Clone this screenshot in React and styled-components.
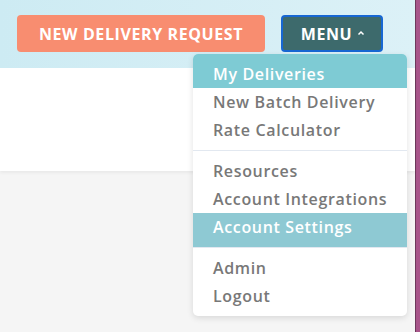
import React from "react";
import styled, { createGlobalStyle } from "styled-components";

const GlobalStyle = createGlobalStyle`
  html, body {
    margin: 0;
    padding: 0;
    background: #f5f5f5;
    font-family: "Open Sans", "DejaVu Sans", sans-serif;
  }
`;

const Page = styled.div`
  display: flex;
  width: 420px;
  height: 332px;
  overflow: hidden;
`;

const Main = styled.div`
  flex: 1;
  display: flex;
  flex-direction: column;
  position: relative;
`;

const SideStrip = styled.div`
  width: 4px;
  background: #a8558a;
  border-left: 1px solid #6e3a5c;
`;

const Header = styled.header`
  height: 68px;
  background: linear-gradient(90deg, #cdebf3 0%, #dcf1f7 100%);
  display: flex;
  align-items: flex-start;
  padding: 15px 0 0 17px;
  gap: 16px;
  box-sizing: border-box;
`;

const Button = styled.button`
  height: 37px;
  padding: 0;
  border-radius: 4px;
  color: #fff;
  font-family: "Open Sans", "DejaVu Sans", sans-serif;
  font-weight: 700;
  font-size: 16px;
  letter-spacing: 0.6px;
  text-transform: uppercase;
  display: flex;
  align-items: center;
  justify-content: center;
  gap: 5px;
  cursor: pointer;
  box-sizing: border-box;
`;

const RequestButton = styled(Button)`
  width: 248px;
  background: #f88d70;
  border: none;
`;

const MenuButton = styled(Button)`
  width: 102px;
  background: #3d6a6c;
  border: 2px solid #1767d3;
  padding-left: 2px;
`;

const Caret = styled.svg`
  width: 8px;
  height: 6px;
  margin-top: -1px;
`;

const WhiteBand = styled.div`
  height: 103px;
  background: #fff;
  box-shadow: 0 2px 3px rgba(0, 0, 0, 0.05);
`;

const Dropdown = styled.nav`
  position: absolute;
  top: 54px;
  left: 193px;
  width: 214px;
  background: #fff;
  border-radius: 5px;
  box-shadow: 0 2px 6px rgba(0, 0, 0, 0.12);
  overflow: hidden;
`;

const Group = styled.div`
  & + & {
    border-top: 1px solid #e2e8f0;
  }
`;

const Item = styled.a`
  display: block;
  height: 28px;
  line-height: 28px;
  padding: 0 20px;
  font-size: 16px;
  font-weight: 600;
  letter-spacing: 0.65px;
  color: ${({ $active }) => ($active ? "#fff" : "#787878")};
  background: ${({ $active }) => $active || "transparent"};
  text-decoration: none;
  white-space: nowrap;

  &:first-child {
    padding-top: 6px;
  }
  &:last-child {
    padding-bottom: 6px;
  }
`;

const groups = [
  [
    { label: "My Deliveries", active: "#7ecbd4" },
    { label: "New Batch Delivery" },
    { label: "Rate Calculator" },
  ],
  [
    { label: "Resources" },
    { label: "Account Integrations" },
    { label: "Account Settings", active: "#8ec9d3" },
  ],
  [{ label: "Admin" }, { label: "Logout" }],
];

export default function App() {
  return (
    <>
      <GlobalStyle />
      <Page>
        <Main>
          <Header>
            <RequestButton>New Delivery Request</RequestButton>
            <MenuButton>
              Menu
              <Caret viewBox="0 0 8 6">
                <path d="M1.5 4.5 L4 2 L6.5 4.5" fill="none" stroke="#fff" strokeWidth="1.5" />
              </Caret>
            </MenuButton>
          </Header>
          <WhiteBand />
          <Dropdown>
            {groups.map((g, i) => (
              <Group key={i}>
                {g.map((it) => (
                  <Item key={it.label} $active={it.active}>
                    {it.label}
                  </Item>
                ))}
              </Group>
            ))}
          </Dropdown>
        </Main>
        <SideStrip />
      </Page>
    </>
  );
}
